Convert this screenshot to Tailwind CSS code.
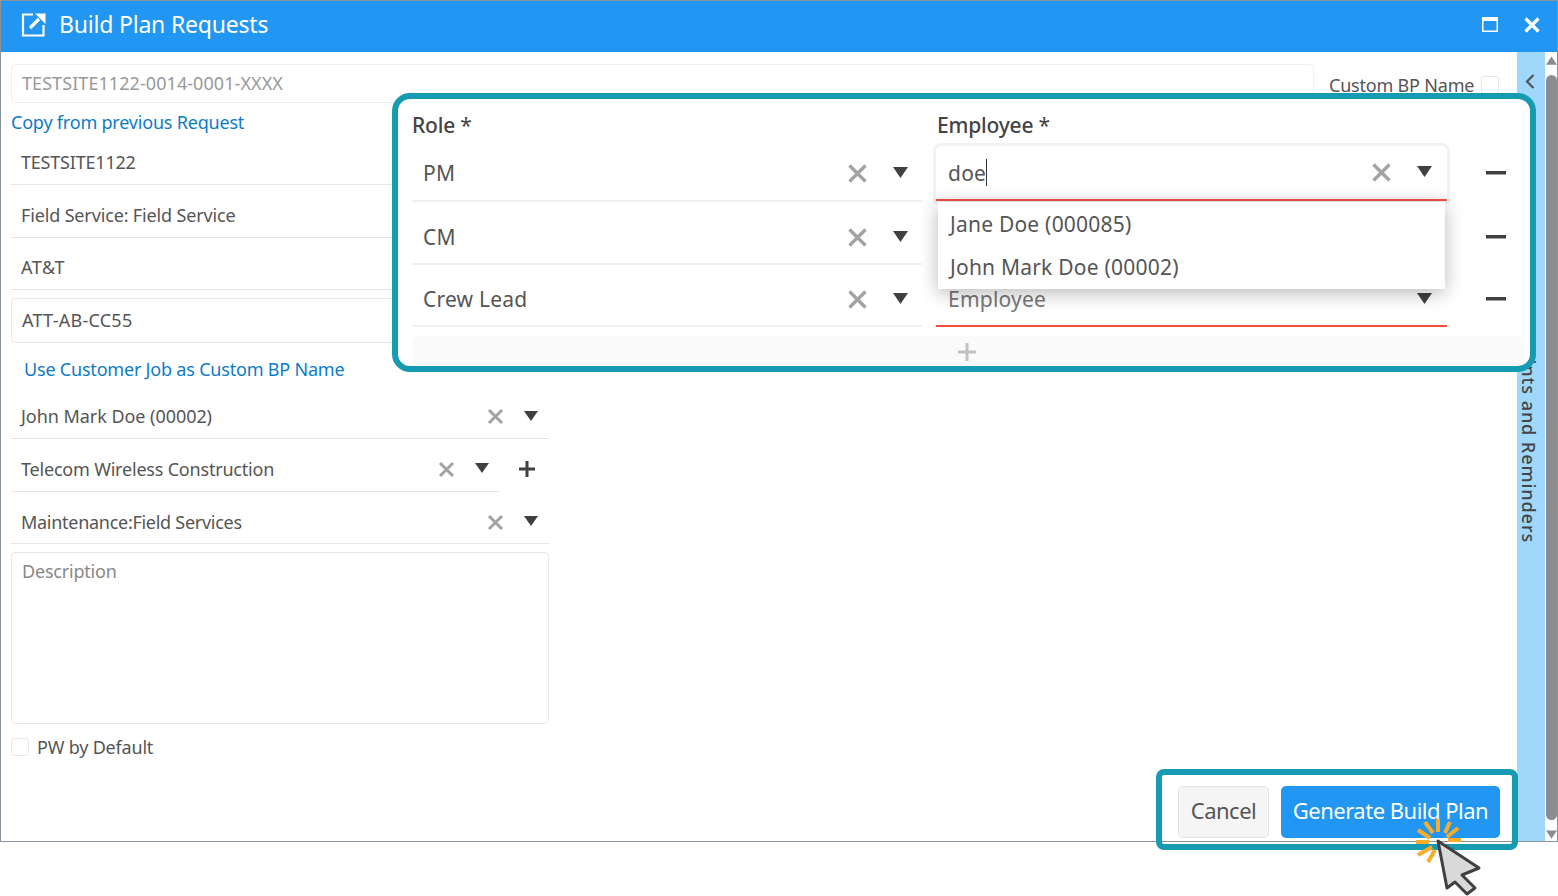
<!DOCTYPE html>
<html lang="en">
<head>
<meta charset="utf-8">
<title>Build Plan Requests</title>
<script src="https://cdn.jsdelivr.net/npm/@tailwindcss/browser@4"></script>
</head>
<body class="bg-white">
<div class="relative w-[1558px] h-[896px] overflow-hidden bg-white font-['Noto_Sans','Open_Sans',sans-serif] text-[#555] text-[18px] tracking-[-0.2px]">

  <!-- window -->
  <div class="h-[842px] border border-[#8a949c] flex flex-col">
    <header class="h-[51px] bg-[#2196f3] text-white flex items-center pl-[20px] pr-[17px] pb-[4px] shrink-0">
      <svg class="w-[25px] h-[25px]" viewBox="0 0 25 25" fill="none" stroke="#fff"><path d="M12 2.500H2v21h20.500V13" stroke-width="2.200"/><path d="M9 16l9-9" stroke-width="3.200"/><path d="M14 1.500h10.500V12z" fill="#fff" stroke="none"/></svg>
      <h1 class="ml-[13px] text-[23px] font-normal tracking-[-0.2px]">Build Plan Requests</h1>
      <div class="ml-auto flex items-center gap-[26px]">
        <svg class="w-[16px] h-[15px]" viewBox="0 0 16 15" fill="none" stroke="#fff"><path d="M.75.750h14.500v13.500H.75z" stroke-width="1.500"/><path d="M1 2.500h14" stroke-width="3"/></svg>
        <svg class="w-[16px] h-[16px]" viewBox="0 0 16 16" fill="none" stroke="#fff" stroke-width="3.200"><path d="M1.500 1.500l13 13M14.500 1.500l-13 13"/></svg>
      </div>
    </header>

    <div class="flex flex-1 min-h-0">
      <main class="flex-1 flex flex-col pl-[10px] pt-[12px] pr-[17px] pb-[3px] min-w-0">
        <div class="flex items-start">
          <div class="w-[1303px] h-[39px] border border-[#f0f0f0] rounded-[4px] pl-[10px] flex items-center text-[#999] tracking-[0.07px]">TESTSITE1122-0014-0001-XXXX</div>
          <label class="ml-[15px] mt-[10px] flex items-center h-[22px] whitespace-nowrap">Custom BP Name<span class="ml-[7px] w-[18px] h-[18px] border border-[#e8e8e8] rounded-[3px]"></span></label>
        </div>
        <a class="h-[39px] flex items-center text-[#0d7cc7]">Copy from previous Request</a>
        <div class="w-[538px] flex flex-col">
          <div class="h-[43px] pl-[10px] flex items-center border-b border-[#e6e6e6] pb-[2px]">TESTSITE1122</div>
          <div class="h-[53px] pl-[10px] pt-[9px] flex items-center border-b border-[#e6e6e6] tracking-[-0.15px]">Field Service: Field Service</div>
          <div class="h-[52px] pl-[10px] pt-[8px] flex items-center border-b border-[#e6e6e6] tracking-[0.5px]">AT&amp;T</div>
          <div class="mt-[8px] h-[45px] pl-[10px] flex items-center border border-[#e8e8e8] rounded-[4px] tracking-[0.25px]">ATT-AB-CC55</div>
          <a class="h-[54px] pl-[13px] pb-[2px] flex items-center text-[#0d7cc7]">Use Customer Job as Custom BP Name</a>
          <div class="h-[42px] pl-[10px] pr-[11px] flex items-center border-b border-[#e6e6e6] pb-[2px] tracking-[-0.05px]">
            <span>John Mark Doe (00002)</span>
            <svg class="ml-auto w-[17px] h-[17px]" viewBox="0 0 17 17" fill="none" stroke="#a3a3a3" stroke-width="3"><path d="M2 2l13 13M15 2L2 15"/></svg>
            <svg class="ml-[20px] w-[14px] h-[12px] -mt-[2px]" viewBox="0 0 14 12" fill="#404040"><path d="M0 1h14L7 11z"/></svg>
          </div>
          <div class="h-[53px] flex items-center">
            <div class="w-[489px] h-[53px] pl-[10px] pr-[11px] pt-[8px] flex items-center border-b border-[#e6e6e6]">
              <span>Telecom Wireless Construction</span>
              <svg class="ml-auto w-[17px] h-[17px]" viewBox="0 0 17 17" fill="none" stroke="#a3a3a3" stroke-width="3"><path d="M2 2l13 13M15 2L2 15"/></svg>
              <svg class="ml-[20px] w-[14px] h-[12px] -mt-[2px]" viewBox="0 0 14 12" fill="#404040"><path d="M0 1h14L7 11z"/></svg>
            </div>
            <svg class="ml-[19px] w-[16px] h-[16px] mt-[6px]" viewBox="0 0 16 16" stroke="#404040" stroke-width="3"><path d="M8 0v16M0 8h16"/></svg>
          </div>
          <div class="h-[52px] pl-[10px] pr-[11px] pt-[9px] flex items-center border-b border-[#e6e6e6] tracking-[-0.28px]">
            <span>Maintenance:Field Services</span>
            <svg class="ml-auto w-[17px] h-[17px]" viewBox="0 0 17 17" fill="none" stroke="#a3a3a3" stroke-width="3"><path d="M2 2l13 13M15 2L2 15"/></svg>
            <svg class="ml-[20px] w-[14px] h-[12px] -mt-[2px]" viewBox="0 0 14 12" fill="#404040"><path d="M0 1h14L7 11z"/></svg>
          </div>
          <div class="mt-[8px] h-[172px] border border-[#e8e8e8] rounded-[4px] pl-[10px] pt-[5px] text-[#888]">Description</div>
          <label class="mt-[14px] h-[18px] flex items-center"><span class="w-[18px] h-[18px] border border-[#e8e8e8] rounded-[3px]"></span><span class="ml-[8px]">PW by Default</span></label>
        </div>
        <div class="mt-auto flex justify-end gap-[12px] text-[22px] tracking-[-0.5px]">
          <button class="w-[91px] h-[52px] pb-[3px] bg-[#f5f5f5] border border-[#e4e4e4] rounded-[5px] text-[#555]">Cancel</button>
          <button class="w-[219px] h-[52px] pb-[3px] bg-[#2196f3] rounded-[5px] text-white">Generate Build Plan</button>
        </div>
      </main>

      <aside class="w-[28px] bg-[#a0d8fb] flex flex-col items-center shrink-0 relative">
        <svg class="mt-[22px] w-[10px] h-[15px] -ml-[2px]" viewBox="0 0 10 15" fill="none" stroke="#555" stroke-width="2.200"><path d="M8.500 1L2 7.500 8.500 14"/></svg>
        <span class="mt-[256px] -ml-[6px] [writing-mode:vertical-rl] whitespace-nowrap text-[#444] font-medium tracking-[0.95px]">Hints and Reminders</span>
      </aside>

      <div class="w-[12px] shrink-0 flex flex-col items-end bg-white">
        <svg class="mt-[4px] w-[11px] h-[9px]" viewBox="0 0 12 9" fill="#8c8c8c"><path d="M6 0l6 9H0z"/></svg>
        <div class="mt-[10px] w-[11px] flex-1 bg-[#8c8c8c] rounded-full"></div>
        <svg class="mt-[10px] mb-[2px] w-[11px] h-[9px]" viewBox="0 0 12 9" fill="#8c8c8c"><path d="M6 9L0 0h12z"/></svg>
      </div>
    </div>
  </div>

  <!-- highlighted role panel -->
  <section class="absolute left-[392px] top-[93px] w-[1144px] h-[279px] border-[6px] border-[#169bb3] rounded-[18px] bg-white pl-[14px] pr-[8px] pt-[12px] overflow-hidden">
    <div class="flex text-[21px] font-medium text-[#444] h-[33px] pb-[4px] items-center">
      <div class="w-[525px]">Role <span class="font-normal">*</span></div>
      <div>Employee <span class="font-normal">*</span></div>
    </div>
    <div class="text-[21px] relative tracking-[0.22px]">
      <div class="flex h-[58px] pt-[2px]">
        <div class="w-[510px] pl-[11px] pr-[14px] flex items-center border-b-2 border-[#f0f0f0]">
          <span class="mt-[2px]">PM</span>
          <svg class="ml-auto w-[21px] h-[21px]" viewBox="0 0 21 21" fill="none" stroke="#a3a3a3" stroke-width="3.400"><path d="M2.500 2.500l16 16M18.500 2.500l-16 16"/></svg>
          <svg class="ml-[25px] w-[15px] h-[13px] -mt-[2px]" viewBox="0 0 15 13" fill="#404040"><path d="M0 1h15L7.500 12z"/></svg>
        </div>
        <div class="relative ml-[14px] w-[511px] h-[55px] pl-[12px] pr-[15px] flex items-center bg-white rounded-t-[5px] border-b-2 border-[#f4503f] ring-[3px] ring-[#f2f2f2] shadow-[inset_0_-10px_10px_-10px_rgba(0,0,0,0.06)]">
          <span class="mt-[2px]">doe</span><span class="w-px h-[27px] bg-[#333]"></span>
          <svg class="ml-auto w-[21px] h-[21px]" viewBox="0 0 21 21" fill="none" stroke="#a3a3a3" stroke-width="3.400"><path d="M2.500 2.500l16 16M18.500 2.500l-16 16"/></svg>
          <svg class="ml-[25px] w-[15px] h-[13px] -mt-[2px]" viewBox="0 0 15 13" fill="#404040"><path d="M0 1h15L7.500 12z"/></svg>
        </div>
        <svg class="ml-[39px] mt-[25px] w-[20px] h-[4px]" viewBox="0 0 20 4" fill="#404040"><path d="M0 0h20v3.500H0z"/></svg>
      </div>
      <div class="flex h-[63px]">
        <div class="w-[510px] pl-[11px] pr-[14px] flex items-center border-b-2 border-[#f0f0f0] pt-[10px]">
          <span>CM</span>
          <svg class="ml-auto w-[21px] h-[21px]" viewBox="0 0 21 21" fill="none" stroke="#a3a3a3" stroke-width="3.400"><path d="M2.500 2.500l16 16M18.500 2.500l-16 16"/></svg>
          <svg class="ml-[25px] w-[15px] h-[13px] -mt-[2px]" viewBox="0 0 15 13" fill="#404040"><path d="M0 1h15L7.500 12z"/></svg>
        </div>
        <div class="ml-[14px] w-[511px]"></div>
        <svg class="ml-[39px] mt-[33px] w-[20px] h-[4px]" viewBox="0 0 20 4" fill="#404040"><path d="M0 0h20v3.500H0z"/></svg>
      </div>
      <div class="flex h-[62px]">
        <div class="w-[510px] pl-[11px] pr-[14px] flex items-center border-b-2 border-[#f0f0f0] pt-[9px]">
          <span>Crew Lead</span>
          <svg class="ml-auto w-[21px] h-[21px]" viewBox="0 0 21 21" fill="none" stroke="#a3a3a3" stroke-width="3.400"><path d="M2.500 2.500l16 16M18.500 2.500l-16 16"/></svg>
          <svg class="ml-[25px] w-[15px] h-[13px] -mt-[2px]" viewBox="0 0 15 13" fill="#404040"><path d="M0 1h15L7.500 12z"/></svg>
        </div>
        <div class="ml-[14px] w-[511px] pl-[12px] pr-[15px] flex items-center border-b-2 border-[#f4503f] pt-[9px] text-[#777]">
          <span>Employee</span>
          <svg class="ml-auto w-[15px] h-[13px] -mt-[2px]" viewBox="0 0 15 13" fill="#404040"><path d="M0 1h15L7.500 12z"/></svg>
        </div>
        <svg class="ml-[39px] mt-[32px] w-[20px] h-[4px]" viewBox="0 0 20 4" fill="#404040"><path d="M0 0h20v3.500H0z"/></svg>
      </div>
      <div class="mt-[9px] w-[1110px] h-[30px] bg-[#fafafa] rounded-[6px] flex items-center pl-[545px] pt-[2px]">
        <svg class="w-[20px] h-[20px]" viewBox="0 0 20 20" stroke="#c2c2c2" stroke-width="3"><path d="M10 1v18M1 10h18"/></svg>
      </div>
      <!-- dropdown -->
      <ul class="absolute left-[526px] top-[58px] w-[507px] h-[87px] bg-white shadow-[0_4px_18px_rgba(0,0,0,0.28)] pl-[12px] pt-[1px]">
        <li class="h-[43px] flex items-center">Jane Doe (000085)</li>
        <li class="h-[43px] flex items-center">John Mark Doe (00002)</li>
      </ul>
    </div>
  </section>

  <!-- highlighted actions frame -->
  <div class="absolute left-[1156px] top-[769px] w-[362px] h-[81px] border-[6px] border-[#169bb3] rounded-[8px]"></div>

  <!-- click cursor -->
  <svg class="absolute left-[1412px] top-[818px] w-[72px] h-[78px]" viewBox="0 0 72 78" fill="none">
    <path d="M4 24H17M36 22H49M26 1V14M13 4L21 15M6 12L18 20M38 4L33 15M46 10L35 19M6 37L20 29M16 44L23 32" stroke="#f9ac2a" stroke-width="4"/>
    <path d="M26 23L67 50 50 57 63 70 55 76 43 64 35 70z" fill="#d9d9d9" stroke="#404040" stroke-width="3" stroke-linejoin="round"/>
  </svg>
</div>
</body>
</html>
